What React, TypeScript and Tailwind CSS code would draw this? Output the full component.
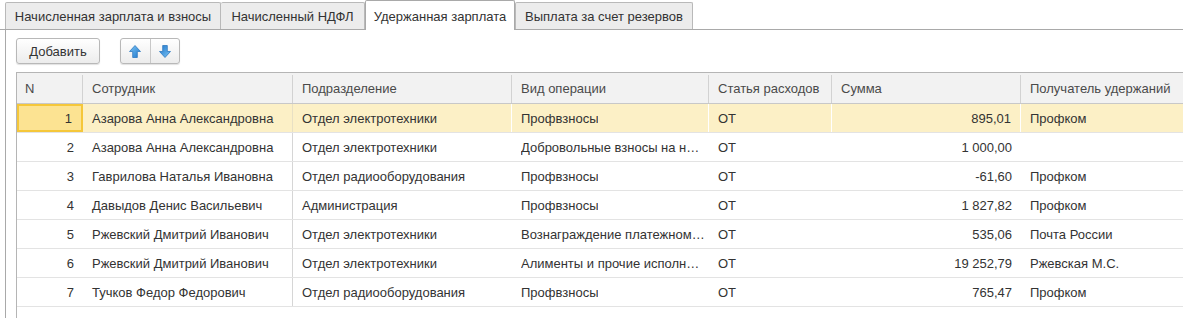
import React from 'react';

type Row = {
  n: number;
  employee: string;
  dept: string;
  op: string;
  article: string;
  sum: string;
  recipient: string;
};

const rows: Row[] = [
  { n: 1, employee: 'Азарова Анна Александровна', dept: 'Отдел электротехники', op: 'Профвзносы', article: 'ОТ', sum: '895,01', recipient: 'Профком' },
  { n: 2, employee: 'Азарова Анна Александровна', dept: 'Отдел электротехники', op: 'Добровольные взносы на негосударственное пенсионное обеспечение', article: 'ОТ', sum: '1 000,00', recipient: '' },
  { n: 3, employee: 'Гаврилова Наталья Ивановна', dept: 'Отдел радиооборудования', op: 'Профвзносы', article: 'ОТ', sum: '-61,60', recipient: 'Профком' },
  { n: 4, employee: 'Давыдов Денис Васильевич', dept: 'Администрация', op: 'Профвзносы', article: 'ОТ', sum: '1 827,82', recipient: 'Профком' },
  { n: 5, employee: 'Ржевский Дмитрий Иванович', dept: 'Отдел электротехники', op: 'Вознаграждение платежному агенту', article: 'ОТ', sum: '535,06', recipient: 'Почта России' },
  { n: 6, employee: 'Ржевский Дмитрий Иванович', dept: 'Отдел электротехники', op: 'Алименты и прочие исполнительные листы', article: 'ОТ', sum: '19 252,79', recipient: 'Ржевская М.С.' },
  { n: 7, employee: 'Тучков Федор Федорович', dept: 'Отдел радиооборудования', op: 'Профвзносы', article: 'ОТ', sum: '765,47', recipient: 'Профком' },
];

const tabs = [
  { label: 'Начисленная зарплата и взносы', w: 'w-[216px]' },
  { label: 'Начисленный НДФЛ', w: 'w-[144px]' },
  { label: 'Удержанная зарплата', w: 'w-[150px]', active: true },
  { label: 'Выплата за счет резервов', w: 'w-[178px]' },
];

function Arrow({ down }: { down?: boolean }) {
  const id = down ? 'gdown' : 'gup';
  return (
    <svg width="12" height="13" viewBox="0 0 12 13" className={down ? 'rotate-180' : ''}>
      <defs>
        <linearGradient id={id} x1="0" y1="0" x2="1" y2="1">
          <stop offset="0" stopColor="#7cc4f4" />
          <stop offset="1" stopColor="#1f78cc" />
        </linearGradient>
      </defs>
      <path
        d="M6 0.5 L11.5 6.5 L8.3 6.5 L8.3 12.5 L3.7 12.5 L3.7 6.5 L0.5 6.5 Z"
        fill={`url(#${id})`}
        stroke="#2f78c0"
        strokeWidth="0.8"
        strokeLinejoin="round"
      />
    </svg>
  );
}

export default function App() {
  return (
    <div className="h-[318px] w-[1183px] overflow-hidden bg-white font-['Liberation_Sans',Arial,sans-serif] text-[13px] text-[#333]">
      {/* tabs */}
      <div className="flex h-[30px] items-end border-b border-[#a9a9a9] pl-[5px]">
        {tabs.map((t) =>
          t.active ? (
            <div
              key={t.label}
              className={`${t.w} -mb-px flex h-[30px] items-center justify-center rounded-t-[2px] border border-b-0 border-[#a9a9a9] bg-white pt-[2px]`}
            >
              {t.label}
            </div>
          ) : (
            <div
              key={t.label}
              className={`${t.w} flex h-[27px] items-center justify-center rounded-t-[2px] border border-b-0 border-[#b9b9b9] bg-[#ececec] pt-[2px] [&+&]:border-l-0`}
            >
              {t.label}
            </div>
          )
        )}
      </div>

      {/* panel */}
      <div className="ml-[5px] h-[288px] border-l border-[#a9a9a9] pl-[10px] pt-[8px]">
        <div className="flex h-[26px] items-stretch gap-[20px]">
          <button className="w-[84px] rounded-[3px] border border-[#b8b8b8] bg-gradient-to-b from-white to-[#ececec] pt-[1px] text-[13px] text-[#333] shadow-[0_1px_1px_rgba(0,0,0,0.12)]">
            Добавить
          </button>
          <div className="flex w-[60px] rounded-[3px] border border-[#b8b8b8] bg-gradient-to-b from-white to-[#ececec] shadow-[0_1px_1px_rgba(0,0,0,0.12)]">
            <div className="flex flex-1 items-center justify-center border-r border-[#c8c8c8]">
              <Arrow />
            </div>
            <div className="flex flex-1 items-center justify-center">
              <Arrow down />
            </div>
          </div>
        </div>

        {/* table */}
        <div className="mt-[8px] h-[300px] border-l border-t border-[#b5b5b5]">
          <div className="flex h-[31px] border-b border-[#c8c8c8] bg-[#f2f2f2] pt-[2px] text-[#4a4a4a]">
            <div className="flex w-[66px] shrink-0 items-center border-r border-[#d2d2d2] pl-[8px]">N</div>
            <div className="flex w-[210px] shrink-0 items-center border-r border-[#d2d2d2] pl-[9px]">Сотрудник</div>
            <div className="flex w-[219px] shrink-0 items-center border-r border-[#d2d2d2] pl-[9px]">Подразделение</div>
            <div className="flex w-[197px] shrink-0 items-center border-r border-[#d2d2d2] pl-[9px]">Вид операции</div>
            <div className="flex w-[123px] shrink-0 items-center border-r border-[#d2d2d2] pl-[9px]">Статья расходов</div>
            <div className="flex w-[189px] shrink-0 items-center border-r border-[#d2d2d2] pl-[9px]">Сумма</div>
            <div className="flex flex-1 items-center whitespace-nowrap pl-[9px]">Получатель удержаний</div>
          </div>

          {rows.map((r) => {
            const sel = r.n === 1;
            const sep = sel ? 'border-r border-white' : '';
            return (
              <div
                key={r.n}
                className={`flex h-[29px] border-b border-[#e3e3e3] ${sel ? 'bg-[#fcf0c6]' : 'bg-white'}`}
              >
                <div
                  className={`flex w-[66px] shrink-0 items-center justify-end pt-[2px] pr-[9px] ${
                    sel ? 'border-2 border-[#f5c73a] bg-[#fce392] pr-[8px]' : ''
                  }`}
                >
                  {r.n}
                </div>
                <div className={`flex w-[210px] shrink-0 items-center border-r pl-[9px] pt-[2px] ${sel ? 'border-[#e8e0c4]' : 'border-[#d6d6d6]'}`}>
                  {r.employee}
                </div>
                <div className={`flex w-[219px] shrink-0 items-center pl-[9px] pt-[2px] ${sep}`}>{r.dept}</div>
                <div className={`flex w-[197px] shrink-0 items-center overflow-hidden pl-[9px] pr-[4px] pt-[2px] ${sep}`}>
                  <span className="truncate">{r.op}</span>
                </div>
                <div className={`flex w-[123px] shrink-0 items-center pl-[9px] pt-[2px] ${sep}`}>{r.article}</div>
                <div className={`flex w-[189px] shrink-0 items-center justify-end pr-[9px] pt-[2px] ${sep}`}>{r.sum}</div>
                <div className="flex flex-1 items-center whitespace-nowrap pl-[9px] pt-[2px]">{r.recipient}</div>
              </div>
            );
          })}
        </div>
      </div>
    </div>
  );
}
